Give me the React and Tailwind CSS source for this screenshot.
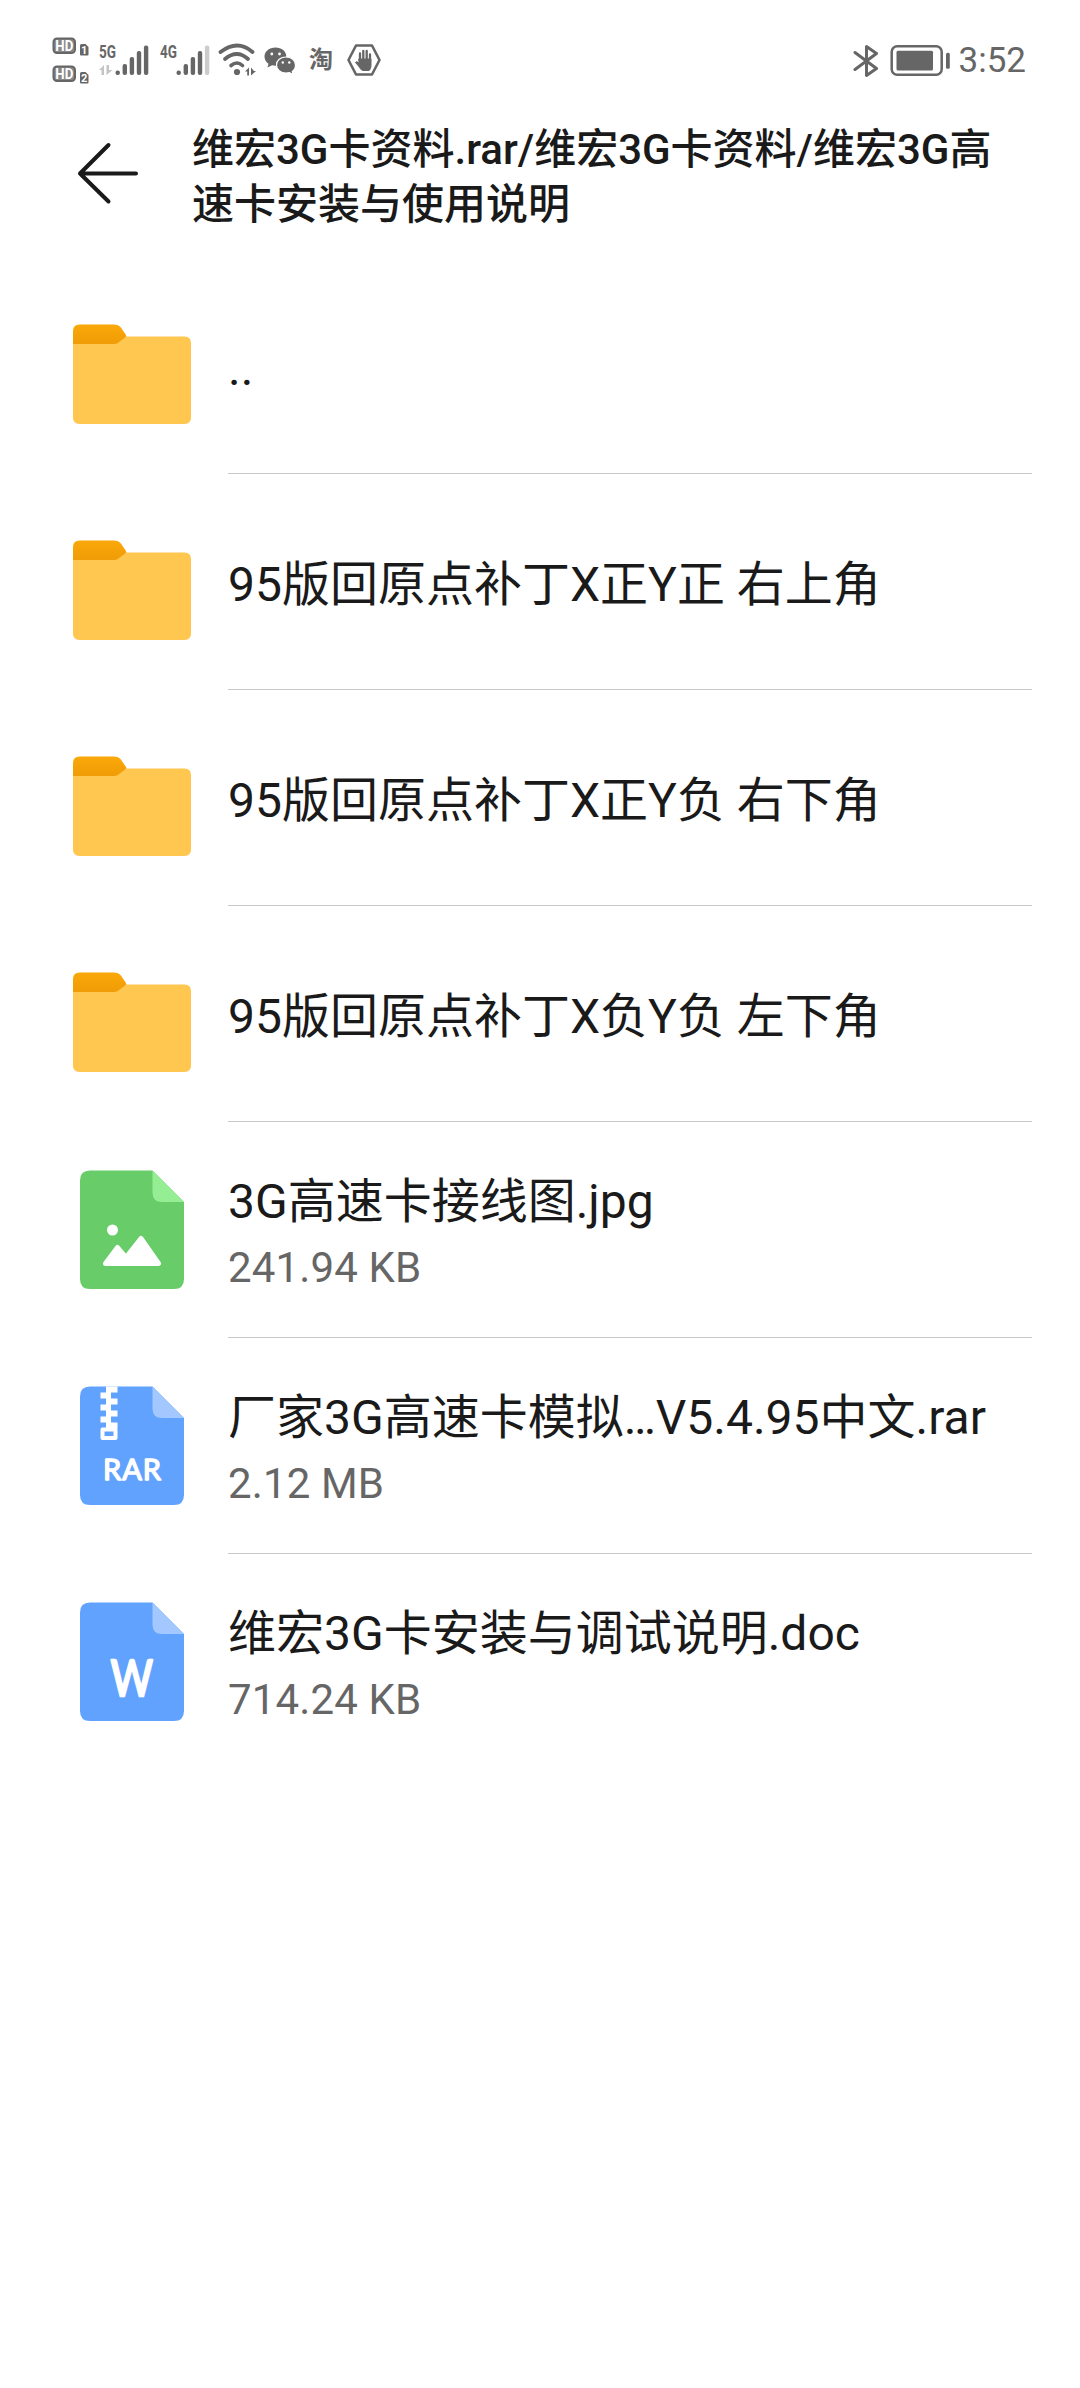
const entries = [
  { type: 'folder', name: '..' },
  { type: 'folder', name: '95版回原点补丁X正Y正 右上角' },
  { type: 'folder', name: '95版回原点补丁X正Y负 右下角' },
  { type: 'folder', name: '95版回原点补丁X负Y负 左下角' },
  { type: 'image', name: '3G高速卡接线图.jpg', size: '241.94 KB' },
  { type: 'rar', name: '厂家3G高速卡模拟…V5.4.95中文.rar', size: '2.12 MB' },
  { type: 'doc', name: '维宏3G卡安装与调试说明.doc', size: '714.24 KB' },
]

function HdIcon({ sim }) {
  return (
    <svg className="block" width="38" height="19" viewBox="0 0 38 19">
      <rect x="1.500" y="1.500" width="21.500" height="14.500" rx="3.500" fill="#888" stroke="#666" strokeWidth="2" />
      <text x="12.300" y="14" fontSize="14.500" fontWeight="700" textAnchor="middle" textLength="18" lengthAdjust="spacingAndGlyphs" fill="#fff">HD</text>
      <path d="M28 8.500q0-1.500 1.500-1.500h4l3 3v7.500q0 1-1 1h-6.500q-1 0-1-1z" fill="#666" />
      <text x="32.200" y="17" fontSize="11" fontWeight="700" textAnchor="middle" fill="#fff">{sim}</text>
    </svg>
  )
}

function Signal({ label, bars, data }) {
  const tops = [27.500, 21, 14, 8, 2.500]
  return (
    <svg className="block" width="52" height="34" viewBox="0 0 52 34">
      <text x="0" y="14.500" fontSize="17.500" fontWeight="700" textLength="17" lengthAdjust="spacingAndGlyphs" fill="#666">{label}</text>
      {data && <path d="M0 27l5-5v10H2.500v-5zM7.500 22v10l6-5h-3.500v-5z" fill="#c4c4c4" />}
      {tops.map((top, i) => (
        <rect key={i} x={16.500 + i * 7.100} y={top} width="4.400" height={32 - top} rx="2" fill={i < bars ? '#666' : '#ccc'} />
      ))}
    </svg>
  )
}

function WifiIcon() {
  return (
    <svg className="block" width="40" height="34" viewBox="0 0 40 34" fill="none" stroke="#666" strokeLinecap="round">
      <path d="M2.500 9Q19.500-4 34.500 9" strokeWidth="3.800" />
      <path d="M7 16Q19 6 30 16" strokeWidth="3.800" />
      <path d="M13 22.500Q19 17.500 24.500 22.500" strokeWidth="3.600" />
      <circle cx="19" cy="29" r="3.100" fill="#666" stroke="none" />
      <path d="M27 28.500l4-4v8h-1.800v-4zM33 24.500v8l5-4.500h-2z" fill="#666" stroke="none" />
    </svg>
  )
}

function WechatIcon() {
  return (
    <svg className="block" width="34" height="30" viewBox="0 0 34 30">
      <path d="M12.500 1.500C6 1.500 1.500 5.500 1.500 10.500c0 3.200 1.700 5.700 4 7.300L4.500 21.500l4.500-2.200c1.100.3 2.300.4 3.500.4 6.200 0 10.800-4 10.800-9.200S18.700 1.500 12.500 1.500z" fill="#666" />
      <path d="M23 11c-5.500 0-9.500 3.500-9.500 8s4 8 9.500 8c1.200 0 2.300-.1 3.300-.4l4 2-1-3.200c2-1.400 3.200-3.700 3.200-6.400 0-4.500-4-8-9.500-8z" fill="#666" stroke="#fff" strokeWidth="1.200" />
      <circle cx="8.800" cy="8" r="1.400" fill="#fff" />
      <circle cx="16.500" cy="8" r="1.400" fill="#fff" />
      <circle cx="19.800" cy="16.500" r="1.200" fill="#fff" />
      <circle cx="26.300" cy="16.500" r="1.200" fill="#fff" />
    </svg>
  )
}

function HandIcon() {
  return (
    <svg className="block" width="36" height="34" viewBox="0 0 36 34" fill="none" stroke="#666" strokeLinejoin="round" strokeLinecap="round">
      <path d="M10 2.500h16L33.500 17 26 31.500H10L2.500 17z" strokeWidth="2.600" />
      <path d="M14 18V10.500M17.300 17V7.800M20.700 17V8M24 18v-6.500" strokeWidth="2.300" />
      <path d="M13 16h12v6c0 3-1 5-2 5.500h-6.500c-1.500-.5-2.500-2.500-4-4.500L9.500 19.500c.5-1 2-1 3.500.5z" fill="#666" strokeWidth="1" />
    </svg>
  )
}

function StatusBar() {
  return (
    <div className="h-[114px] pt-[37px] px-[52px] flex items-start justify-between text-[#666]">
      <div className="flex items-start">
        <div className="flex flex-col gap-[9px]">
          <HdIcon sim="1" />
          <HdIcon sim="2" />
        </div>
        <div className="flex items-start pt-[6px] pl-[9px]">
          <Signal label="5G" bars={5} data />
          <div className="w-[9px]" />
          <Signal label="4G" bars={4} />
          <div className="w-[6px]" />
          <WifiIcon />
          <div className="w-[5px] shrink-0" />
          <div className="pt-[3px]"><WechatIcon /></div>
          <span className="ml-[12px] mt-[4px] w-[26px] text-[24px] leading-[26px] font-bold">淘</span>
          <div className="ml-[11px]"><HandIcon /></div>
        </div>
      </div>
      <div className="flex items-start pt-[7px] pr-[2px]">
        <svg className="block" width="26" height="34" viewBox="0 0 26 34" fill="none" stroke="#666" strokeWidth="3" strokeLinejoin="round" strokeLinecap="round">
          <path d="M2 8.500L23.500 24.500 13.500 31.500V2.500l10 7L2 25.500" />
        </svg>
        <svg className="block ml-[11px]" width="62" height="34" viewBox="0 0 62 34">
          <rect x="1.700" y="2.200" width="50" height="28.600" rx="5.500" fill="none" stroke="#666" strokeWidth="2.500" />
          <rect x="6.500" y="6.700" width="36.500" height="19.800" rx="1.500" fill="#666" />
          <rect x="56" y="8.700" width="3.800" height="16" rx="1.500" fill="#666" />
        </svg>
        <span className="ml-[7px] text-[35px] leading-[34px]">3:52</span>
      </div>
    </div>
  )
}

function Header() {
  return (
    <div className="h-[144px] flex items-start pl-[76px]">
      <svg className="block mt-[27px]" width="64" height="64" viewBox="0 0 64 64" fill="none" stroke="#1a1a1a" strokeWidth="4" strokeLinecap="round" strokeLinejoin="round">
        <path d="M60 32.500H4M32.500 4L4 32.500l28.500 28" />
      </svg>
      <h1 className="ml-[52px] mt-[8px] w-[816px] break-all text-[42px] leading-[55px] font-medium">
        维宏3G卡资料.rar/维宏3G卡资料/维宏3G高速卡安装与使用说明
      </h1>
    </div>
  )
}

function FolderIcon() {
  return (
    <svg className="block" width="144" height="144" viewBox="0 0 144 144">
      <defs>
        <linearGradient id="tab" x1="0" y1="0" x2="0" y2="1">
          <stop offset="0" stopColor="#faa80a" />
          <stop offset="1" stopColor="#f09c06" />
        </linearGradient>
      </defs>
      <path d="M13 45l47-2.500h64.500q6.500 0 6.500 6.500v74.500q0 6.500-6.500 6.500h-105q-6.500 0-6.500-6.500z" fill="#ffc650" />
      <path d="M13 50V37q0-6.500 6.500-6.500h35q4 0 6 2.500l5.500 8q1 1.500-1 2.500l-6.500 5q-2.500 1.500-5 1.500z" fill="url(#tab)" />
    </svg>
  )
}

function FileIcon({ type }) {
  const green = type === 'image'
  return (
    <svg className="block" width="144" height="144" viewBox="0 0 144 144">
      <path d="M30 12.500h62.500L124 44v77q0 10-10 10H30q-10 0-10-10V22.500q0-10 10-10z" fill={green ? '#68cc68' : '#62a2ff'} />
      <path d="M92.500 12.500L124 44h-22q-9.500 0-9.500-9.500z" fill={green ? '#95ee93' : '#a2c8ff'} />
      {type === 'image' && (
        <g fill="#fff">
          <circle cx="52.500" cy="72" r="5.500" />
          <path d="M45.500 105.500L57.500 89.500 66 99.500 81 80.500 98.500 105.500z" stroke="#fff" strokeWidth="5" strokeLinejoin="round" />
        </g>
      )}
      {type === 'rar' && (
        <g fill="#fff">
          <path d="M46 12.500h11.500v6H46zM40.500 18.500H51v6H40.500zM46 24.500h11.500v6H46zM40.500 30.500H51v6H40.500zM46 36.500h11.500v6H46zM40.500 42.500H51v6H40.500zM46 48.500h11.500v6H46z" />
          <path d="M42.500 55.500h13v8.500h-13z" fill="none" stroke="#fff" strokeWidth="4" strokeLinejoin="round" />
          <text x="43" y="106" fontSize="29" textLength="58" stroke="#fff" strokeWidth="1.400" strokeLinejoin="round" className="font-['Lato']">RAR</text>
        </g>
      )}
      {type === 'doc' && (
        <text x="71.700" y="106" fontSize="50" textAnchor="middle" textLength="42" lengthAdjust="spacingAndGlyphs" fill="#fff" stroke="#fff" strokeWidth="2.600" strokeLinejoin="round" className="font-['Lato']">W</text>
      )}
    </svg>
  )
}

function Row({ entry, last }) {
  return (
    <div className="h-[216px] flex items-center gap-[24px] pl-[60px] pr-[48px]">
      {entry.type === 'folder' ? <FolderIcon /> : <FileIcon type={entry.type} />}
      <div className={`flex-1 h-full flex flex-col justify-center whitespace-nowrap border-b ${entry.size ? 'pt-[10px]' : 'pt-[7px]'} ${last ? 'border-transparent' : 'border-[#c8c8c8]'}`}>
        <p className="text-[48px] leading-[66px]">{entry.name}</p>
        {entry.size && <p className="text-[42px] leading-[66px] tracking-[0.15px] text-[#666]">{entry.size}</p>}
      </div>
    </div>
  )
}

export default function App() {
  return (
    <div className="w-[1080px] h-[2388px] bg-white text-[#1a1a1a] overflow-hidden font-['Roboto','Noto_Sans_CJK_SC',sans-serif]">
      <StatusBar />
      <Header />
      {entries.map((entry, i) => (
        <Row key={entry.name} entry={entry} last={i === entries.length - 1} />
      ))}
    </div>
  )
}
